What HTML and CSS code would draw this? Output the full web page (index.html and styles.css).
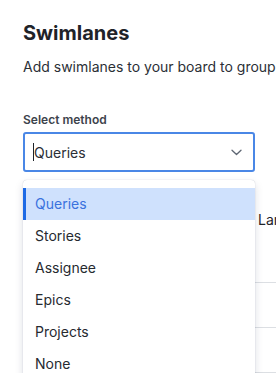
FILE: index.html
```html
<!DOCTYPE html>
<html lang="en">
<head>
    <meta charset="UTF-8">
    <meta name="viewport" content="width=device-width, initial-scale=1.0">
    <title>Swimlanes</title>
    <link rel="stylesheet" href="styles.css">
</head>
<body>
    <div class="panel">
        <h1 class="title">Swimlanes</h1>
        <p class="subtitle">Add swimlanes to your board to group issues</p>

        <label class="field-label" for="method">Select method</label>
        <div class="select" id="method">
            <span class="select-value"><span class="caret"></span>Queries</span>
            <svg class="chevron" width="11" height="7" viewBox="0 0 11 7">
                <path d="M1 1.2 L5.5 5.5 L10 1.2" fill="none" stroke="#5e6673" stroke-width="1.3" stroke-linecap="round" stroke-linejoin="round"/>
            </svg>
        </div>

        <!-- content under the open menu -->
        <div class="behind">
            <div class="behind-head">Lanes</div>
            <div class="behind-row first"></div>
            <div class="behind-row"></div>
            <div class="behind-row"></div>

            <ul class="menu">
                <li class="menu-item active">Queries</li>
                <li class="menu-item">Stories</li>
                <li class="menu-item">Assignee</li>
                <li class="menu-item">Epics</li>
                <li class="menu-item">Projects</li>
                <li class="menu-item">None</li>
            </ul>
        </div>
    </div>
</body>
</html>
```

FILE: styles.css
```css
* {
    margin: 0;
    padding: 0;
    box-sizing: border-box;
    font-family: Inter, 'Noto Sans', sans-serif;
}

body {
    background: #ffffff;
    color: #1f2329;
    overflow: hidden;
}

.panel {
    padding: 21px 0 0 23px;
    width: 520px;
}

.title {
    font-size: 20px;
    line-height: 24px;
    font-weight: 700;
    color: #1f2329;
}

.subtitle {
    margin-top: 12px;
    font-size: 14px;
    line-height: 20px;
    color: #2b2f36;
    white-space: nowrap;
}

.field-label {
    display: block;
    margin-top: 35px;
    font-size: 12px;
    line-height: 16px;
    font-weight: 600;
    color: #3d434c;
}

.select {
    margin-top: 4px;
    width: 232px;
    height: 40px;
    border: 2px solid #4a87e6;
    border-radius: 3px;
    display: flex;
    align-items: center;
    justify-content: space-between;
    padding: 0 11px 0 8px;
}

.select-value {
    display: flex;
    align-items: center;
    font-size: 14px;
    color: #2b2f36;
}

.caret {
    width: 1px;
    height: 18px;
    background: #1f2329;
}

/* content under the menu */
.behind {
    position: relative;
    margin-top: 8px;
    padding-top: 30px;
}

.behind-head {
    padding-left: 235px;
    font-size: 14px;
    line-height: 20px;
    color: #1f2329;
}

.behind-row {
    margin-left: 232px;
    height: 45px;
    border-bottom: 1.5px solid #dcdfe3;
}

.behind-row.first {
    height: 53px;
}

.menu {
    position: absolute;
    top: 0;
    left: 0;
    width: 232px;
    list-style: none;
    background: #ffffff;
    border-radius: 4px;
    padding-top: 8px;
    box-shadow: 0 0 1px rgba(9, 30, 66, 0.3), 0 4px 8px rgba(9, 30, 66, 0.15);
}

.menu-item {
    height: 32px;
    line-height: 32px;
    padding-left: 9px;
    font-size: 14px;
    color: #262a30;
    border-left: 3px solid transparent;
}

.menu-item.active {
    background: #cfe1fd;
    color: #3a72dd;
    border-left-color: #1d6ae5;
}
```
